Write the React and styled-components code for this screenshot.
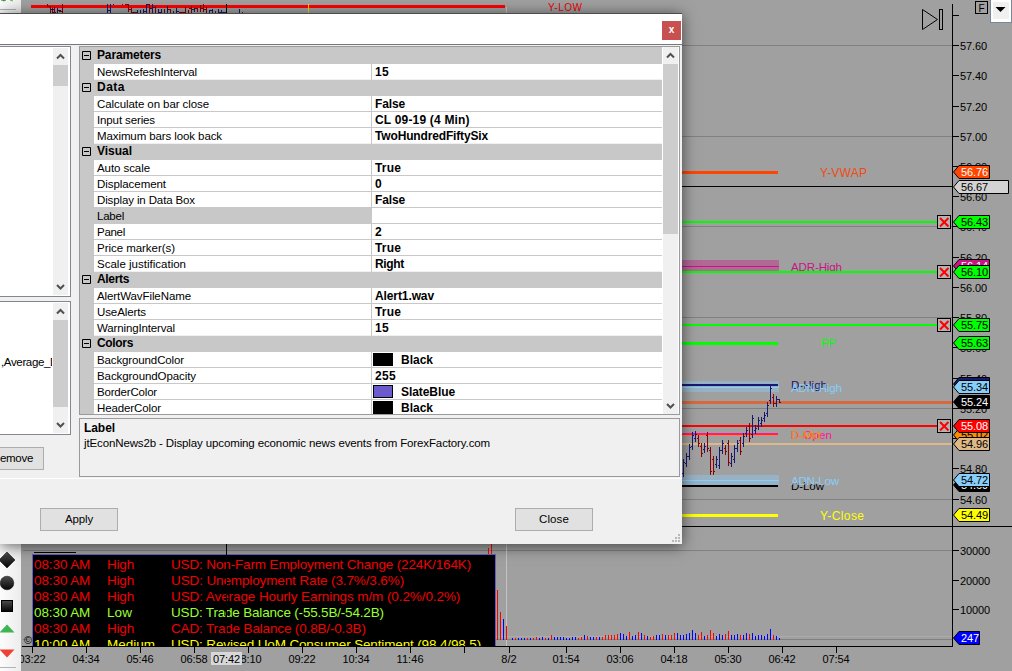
import React from 'react'
import styled, { createGlobalStyle } from 'styled-components';

const GlobalStyle = createGlobalStyle`
    body {
        margin: 0;
        overflow: hidden;
        font-family: "Liberation Sans", Arial, sans-serif;
    }
`

const Screen = styled.div`
    position: relative;
    display: flex;
    width: 1012px;
    height: 671px;
    overflow: hidden;
    background: #a0a0a0;
`

const ToolStrip = styled.div`
    display: flex;
    flex-direction: column;
    justify-content: space-between;
    width: 21px;
    height: 671px;
    background: linear-gradient(90deg, #fcfcfc, #ececec);
`

const ToolGroup = styled.div`
    display: flex;
    flex-direction: column;
    align-items: flex-start;
`

const ToolButton = styled.div`
    height: 23px;
    width: 16px;

    svg {
        display: block;
    }
`

const ToolDivider = styled.div`
    width: 16px;
    height: 1px;
    background: #b4b4b4;
    margin: ${props => props.$margin};
`

const ChartSvg = styled.svg`
    display: block;
    width: 991px;
    height: 671px;
    font-family: "Liberation Sans", Arial, sans-serif;
    font-size: 11px;
`

const NewsPanel = styled.div`
    position: absolute;
    left: 32px;
    top: 554px;
    width: 464px;
    height: 92px;
    box-sizing: border-box;
    overflow: hidden;
    background: #000;
    border: 1px solid #6a5acd;
    border-bottom: 0;
    padding-top: 2px;
`

const NewsRow = styled.div`
    display: grid;
    grid-template-columns: 73px 64px 1fr;
    padding-left: 1px;
    height: 16px;
    font-size: 13.5px;
    line-height: 16px;
    white-space: nowrap;
    color: ${props => props.$color};
`

const CursorLine = styled.div`
    position: absolute;
    left: 226px;
    top: 544px;
    width: 1px;
    height: 102px;
    background: #000;
`

const Dialog = styled.div`
    position: absolute;
    left: 0;
    top: 13px;
    width: 682px;
    height: 531px;
    box-sizing: border-box;
    display: flex;
    flex-direction: column;
    background: #f0f0f0;
    border-top: 1px solid #4c4c4c;
    box-shadow: 0 2px 14px rgba(0, 0, 0, 0.6);
`

const TitleBar = styled.div`
    display: flex;
    justify-content: flex-end;
    height: 30px;
    padding-top: 7px;
    padding-right: 1px;
    box-sizing: border-box;
    background: #fff;
`

const CloseButton = styled.div`
    width: 19px;
    height: 19px;
    background: #c75050;
    color: #fff;
    font-size: 10px;
    font-weight: 700;
    line-height: 18px;
    text-align: center;
`

const Body = styled.div`
    display: flex;
    gap: 8px;
    height: 435px;
    box-sizing: border-box;
    padding-top: 1px;
    border-top: 1px solid #76767a;
    border-bottom: 1px solid #fff;
`

const LeftColumn = styled.div`
    display: flex;
    flex-direction: column;
    width: 71px;
`

const ListBox = styled.div`
    display: flex;
    justify-content: flex-end;
    box-sizing: border-box;
    width: 71px;
    height: ${props => props.$height}px;
    margin-bottom: 4px;
    padding: 1px 1px 1px 0;
    background: #fff;
    border: 1px solid #828790;
    border-left: 0;
    font-size: 11.5px;
`

const ListText = styled.div`
    width: 51px;
    margin-right: auto;
    padding: 53px 0 0 1px;
    overflow: hidden;
    white-space: nowrap;
`

const Scroll = styled.div`
    display: flex;
    flex-direction: column;
    width: 15px;
    margin-right: ${props => props.$gap || 0}px;
    background: #f0f0f0;
    flex-shrink: 0;
`

const ScrollArrow = styled.div`
    height: 17px;
    margin-top: ${props => props.$last ? 'auto' : '0'};

    svg {
        display: block;
    }
`

const ScrollThumb = styled.div`
    height: ${props => props.$height}px;
    background: #cdcdcd;
`

const Button = styled.div`
    box-sizing: border-box;
    width: ${props => props.$width}px;
    height: 23px;
    padding-right: ${props => props.$inset || 0}px;
    border: 1px solid #adadad;
    border-left-width: ${props => props.$cut ? 0 : 1}px;
    background: #e1e1e1;
    font-size: 11.5px;
    line-height: 20px;
    text-align: ${props => props.$cut ? 'right' : 'center'};
`

const RemoveSlot = styled.div`
    margin-top: 8px;
`

const RightColumn = styled.div`
    display: flex;
    flex-direction: column;
    gap: 3px;
    width: 601px;
`

const GridBox = styled.div`
    display: flex;
    box-sizing: border-box;
    height: 369px;
    border: 1px solid #9a9a9c;
    background: #fff;
    overflow: hidden;
    flex-shrink: 0;
`

const Rows = styled.div`
    width: 582px;
    margin-right: 1px;
    font-size: 11.5px;
    white-space: nowrap;
`

const CategoryRow = styled.div`
    display: flex;
    align-items: flex-start;
    gap: 6px;
    box-sizing: border-box;
    height: ${props => props.$first ? 17 : 16}px;
    padding-left: 2px;
    padding-top: ${props => props.$first ? 1 : 0}px;
    background: #c8c8c8;
    font-size: 12px;
    line-height: 14px;
    font-weight: 700;

    svg {
        margin-top: 3px;
    }
`

const PropRow = styled.div`
    display: grid;
    grid-template-columns: 14px 277px 1px 1fr;
    height: 16px;
    line-height: 17px;
`

const Gutter = styled.div`
    background: #c8c8c8;
`

const NameCell = styled.div`
    padding-left: 3px;
    box-sizing: border-box;
    height: 16px;
    border-bottom: 1px solid ${props => props.$last ? '#f0f0f0' : '#c8c8c8'};
    background: ${props => props.$active ? '#c8c8c8' : '#fff'};
`

const ValueCell = styled.div`
    display: flex;
    gap: 8px;
    padding-left: ${props => props.$swatch ? 1 : 3}px;
    box-sizing: border-box;
    height: 16px;
    border-bottom: 1px solid ${props => props.$last ? '#f0f0f0' : '#c8c8c8'};
    font-size: 12px;
    font-weight: 700;
`

const Swatch = styled.div`
    box-sizing: border-box;
    width: 20px;
    height: 13px;
    margin-top: 1px;
    border: 1px solid #000;
    background: ${props => props.$color};
`

const HelpBox = styled.div`
    box-sizing: border-box;
    height: 59px;
    padding: 2px 4px;
    border: 1px solid #9a9a9c;
    font-size: 11.5px;
    line-height: 15px;
    white-space: nowrap;
`

const HelpTitle = styled.div`
    font-size: 12px;
    font-weight: 700;
`

const Footer = styled.div`
    display: flex;
    gap: 397px;
    height: 65px;
    padding: 29px 0 0 40px;
    box-sizing: border-box;
`

const Grip = styled.svg`
    position: absolute;
    right: 1px;
    bottom: 1px;
`

// letter-spacing that makes a label as wide as it was laid out for
const canvas = document.createElement('canvas').getContext('2d');

const getSpacing = (text, width, size, bold) => {
    canvas.font = `${bold ? 700 : 400} ${size}px "Liberation Sans"`;
    return (width - canvas.measureText(text).width) / text.length;
}

const Fit = ({ text, width, size, bold }) => (
    <span style={{ letterSpacing: getSpacing(text, width, size || (bold ? 12 : 11.5), bold) }}>{text}</span>
)

const groups = [
    { title: 'Parameters', width: 64, rows: [['NewsRefeshInterval', 100, '15', 14]] },
    {
        title: 'Data', width: 28, rows: [
            ['Calculate on bar close', 112, 'False', 30],
            ['Input series', 58, 'CL 09-19 (4 Min)', 95],
            ['Maximum bars look back', 125, 'TwoHundredFiftySix', 113],
        ]
    },
    {
        title: 'Visual', width: 35, rows: [
            ['Auto scale', 53, 'True', 26],
            ['Displacement', 69, '0', 7],
            ['Display in Data Box', 98, 'False', 30],
            ['Label', 27, '', 0],
            ['Panel', 28, '2', 7],
            ['Price marker(s)', 78, 'True', 26],
            ['Scale justification', 89, 'Right', 29],
        ]
    },
    {
        title: 'Alerts', width: 32, rows: [
            ['AlertWavFileName', 94, 'Alert1.wav', 59],
            ['UseAlerts', 49, 'True', 26],
            ['WarningInterval', 78, '15', 14],
        ]
    },
    {
        title: 'Colors', width: 36, rows: [
            ['BackgroundColor', 87, 'Black', 32, '#000'],
            ['BackgroundOpacity', 99, '255', 21],
            ['BorderColor', 60, 'SlateBlue', 54, '#6a5acd'],
            ['HeaderColor', 64, 'Black', 32, '#000'],
        ]
    },
];

const news = [
    ['08:30 AM', 'High', 27, 'USD: Non-Farm Employment Change (224K/164K)', 300, '#f00000'],
    ['08:30 AM', 'High', 27, 'USD: Unemployment Rate (3.7%/3.6%)', 233, '#f00000'],
    ['08:30 AM', 'High', 27, 'USD: Average Hourly Earnings m/m (0.2%/0.2%)', 290, '#f00000'],
    ['08:30 AM', 'Low', 25, 'USD: Trade Balance (-55.5B/-54.2B)', 213, '#9aff2f'],
    ['08:30 AM', 'High', 27, 'CAD: Trade Balance (0.8B/-0.3B)', 195, '#f00000'],
    ['10:00 AM', 'Medium', 48, 'USD: Revised UoM Consumer Sentiment (98.4/98.5)', 310, '#ffff00'],
];

const priceTicks = [
    [15, ''], [45, '57.60'], [75, '57.40'], [106, '57.20'], [136, '57.00'], [166, '56.80'],
    [196, '56.60'], [226, '56.40'], [257, '56.20'], [287, '56.00'], [317, '55.80'], [347, '55.60'],
    [378, '55.40'], [408, '55.20'], [438, '55.00'], [468, '54.80'], [499, '54.60'],
    [550, '30000'], [580, '20000'], [609, '10000'],
];

const tags = [
    [172, '56.76', '#ff4500', '#fff'],
    [187, '56.67', '#d3d3d3', '#000', 1008.5],
    [222, '56.43', '#00ff00', '#000'],
    [266, '56.14', '#c71585', '#fff'],
    [272, '56.10', '#00ff00', '#000'],
    [325, '55.75', '#00ff00', '#000'],
    [343, '55.63', '#00ff00', '#000'],
    [384, '55.36', '#191970', '#fff'],
    [387, '55.34', '#87cefa', '#000'],
    [402, '55.24', '#000', '#fff'],
    [435, '55.02', '#ff8c00', '#000'],
    [426, '55.08', '#ff0000', '#fff'],
    [444, '54.96', '#deb887', '#000'],
    [485, '54.69', '#000', '#fff'],
    [480, '54.72', '#87cefa', '#000'],
    [515, '54.49', '#ffff00', '#000'],
    [638, '247', '#0000ff', '#fff', 979.5],
];

// [x1, x2, y, height, colour]
const levels = [
    [682, 778, 171, 3, '#ff4500'],
    [682, 952, 186, 1, '#000'],
    [682, 937, 221, 2, '#00ff00'],
    [682, 779, 266, 1, '#c71585'],
    [682, 937, 271, 2, '#00ff00'],
    [682, 937, 324, 2, '#00ff00'],
    [682, 778, 342, 3, '#00ff00'],
    [682, 778, 383.5, 2, '#191970'],
    [682, 779, 387, 1, '#87cefa'],
    [682, 952, 401, 3, '#d8693e'],
    [682, 937, 425, 2, '#ff0000'],
    [682, 778, 433, 2, '#ff1493'],
    [682, 778, 435, 1, '#ff8c00'],
    [682, 952, 443, 2, '#deb887'],
    [682, 779, 480, 1, '#87cefa'],
    [682, 778, 484.5, 2, '#000'],
    [682, 778, 514, 3, '#ffff00'],
];

const labels = [
    [820, 177, 'Y-VWAP', 47, '#f04a14', 12],
    [791, 271, 'ADR-High', 51, '#c71585'],
    [821, 347, 'PP', 15, '#00ff00'],
    [791, 389, 'D-High', 36, '#191970'],
    [791, 392, 'ADN-High', 51, '#87cefa'],
    [791, 439, 'D-Open', 41, '#ff1493'],
    [791, 439, 'D-Mid', 30, '#ff8c00'],
    [791, 490, 'D-Low', 33, '#000'],
    [791, 485, 'ADN-Low', 48, '#87cefa'],
    [820, 520, 'Y-Close', 44, '#ffff00', 12],
];

const times = [
    [32, '03:22'], [86, '04:34'], [140, '05:46'], [194, '06:58'], [248, '08:10'], [302, '09:22'],
    [356, '10:34'], [410, '11:46'], [464, ''], [509, '8/2'], [566, '01:54'], [620, '03:06'],
    [674, '04:18'], [728, '05:30'], [782, '06:42'], [836, '07:54'],
];

// high, low, direction; one bar every 3px
const bars = [
    [459, 477, 'n'], [453, 467, 'n'], [444, 460, 'n'], [432, 450, 'n'], [431, 442, 'n'], [435, 447, 'r'],
    [443, 457, 'r'], [443, 453, 'n'], [432, 452, 'r'], [447, 475, 'r'], [456, 475, 'r'], [456, 468, 'n'],
    [447, 469, 'n'], [440, 454, 'n'], [445, 455, 'r'], [440, 466, 'r'], [453, 467, 'n'], [445, 463, 'n'],
    [440, 452, 'n'], [437, 455, 'r'], [433, 447, 'n'], [427, 437, 'n'], [423, 442, 'r'], [415, 438, 'n'],
    [425, 434, 'n'], [417, 430, 'n'], [417, 427, 'n'], [412, 422, 'n'], [402, 417, 'n'], [385, 404, 'n'],
    [394, 407, 'r'], [396, 407, 'n'], [399, 403, 'n'],
];

const volume = 'b2 r2 b2 b2 b2 r2 b2 r2 r3 b2 b3 r2 b2 r5 b3 b3 b3 b3 b2 b2 b3 b3 r2 r3 b5 r4 b3 b3 r3 b3 r3 r5 r5 r5 r5 r6 b7 b6 b4 r8 b4 b5 r8 b7 r5 b4 r3 r4 b5 b5 r6 b5 r5 r5 r7 b7 b5 b5 b6 b7 b10 b7 r5 r8 b4 r5 r10 r7 b4 b6 b5 r6 r9 b5 b5 b6 r5 b5 b7 r6 b7 b4 b5 b5 b4 b6 b11 r5 b4 b2'
    .split(' ')
    .map(v => ({ color: v[0] === 'b' ? '#0000ff' : '#ff0000', height: Number(v.slice(1)) }));

// slice of the older session visible above the dialog: x, y, width, height
const oldBars = [
    [47, 4, 1, 3, 'r'], [47, 6, 4, 1, 'r'], [50, 6, 1, 7, 'r'], [52, 8, 1, 5, 'r'], [51, 9, 4, 1, 'n'],
    [53, 12, 3, 1, 'n'], [54, 7, 1, 6, 'r'], [57, 8, 1, 5, 'n'], [57, 10, 4, 1, 'n'], [59, 11, 3, 1, 'r'],
    [62, 4, 1, 9, 'r'], [107, 4, 1, 9, 'n'], [107, 10, 3, 1, 'n'], [110, 4, 1, 9, 'n'],
    [113, 4, 1, 1, 'n'], [122, 4, 1, 1, 'r'], [125, 4, 4, 1, 'r'], [128, 4, 1, 8, 'r'], [129, 9, 3, 1, 'r'],
    [131, 8, 1, 5, 'r'], [132, 12, 5, 1, 'r'], [137, 10, 1, 3, 'n'], [140, 10, 1, 3, 'n'], [143, 9, 1, 4, 'n'],
    [143, 11, 3, 1, 'n'], [146, 4, 1, 9, 'n'], [147, 4, 3, 1, 'n'], [149, 4, 1, 9, 'r'], [150, 8, 3, 1, 'n'],
    [152, 4, 1, 9, 'n'], [153, 7, 3, 1, 'r'], [155, 6, 1, 7, 'r'], [158, 9, 1, 4, 'n'], [158, 12, 4, 1, 'n'],
    [161, 9, 1, 4, 'n'], [164, 9, 1, 4, 'r'], [167, 6, 1, 7, 'n'], [168, 9, 3, 1, 'r'], [170, 9, 1, 4, 'r'],
    [173, 11, 1, 2, 'n'], [176, 8, 1, 5, 'n'], [176, 11, 3, 1, 'n'], [179, 12, 6, 1, 'r'], [185, 7, 1, 6, 'r'],
    [188, 10, 1, 3, 'r'], [189, 8, 3, 1, 'r'], [191, 6, 1, 7, 'r'], [192, 9, 3, 1, 'n'], [194, 8, 1, 4, 'n'],
    [195, 8, 3, 1, 'r'], [197, 8, 1, 4, 'r'], [200, 5, 1, 7, 'r'], [201, 8, 3, 1, 'r'], [203, 4, 1, 8, 'r'],
    [204, 9, 3, 1, 'r'], [206, 7, 1, 6, 'r'], [209, 10, 1, 3, 'n'], [209, 10, 4, 1, 'n'], [212, 9, 1, 4, 'n'],
    [215, 11, 1, 2, 'r'], [218, 9, 1, 4, 'n'], [218, 12, 4, 1, 'n'], [221, 10, 1, 3, 'n'], [222, 12, 4, 1, 'n'],
    [239, 9, 1, 4, 'n'], [242, 12, 1, 1, 'r'],
];

const barColor = { n: '#191970', r: '#8b0000' };

const PriceTag = ({ y, text, fill, color, right = 989.5 }) => (
    <g>
        <path
            d={`M953.5 ${y}L959 ${y - 6.5}H${right}V${y + 6.5}H959Z`}
            fill={fill}
            stroke="#000"
        />
        <text x="961" y={y + 4} fill={color} textLength={text.length === 3 ? 18 : 27}>{text}</text>
    </g>
)

const CrossBox = ({ y }) => (
    <g>
        <rect x="937.5" y={y - 6.5} width="13" height="13" fill="#b4b4b4" stroke="#000" />
        <path d={`M940 ${y - 4}l8.5 8.5m0-8.5l-8.5 8.5`} stroke="#f00" strokeWidth="2" />
    </g>
)

const Chart = () => (
    <ChartSvg viewBox="21 0 991 671">
        <g shapeRendering="crispEdges">
            {[45, 136, 226, 317, 408, 499, 550, 639].map(y => (
                <rect key={y} x="23" y={y} width="929" height="1" fill="#808080" />
            ))}
            <rect x="496" y="636" width="456" height="1" fill="#acacac" />
            <rect x="506" y="7" width="1" height="639" fill="#c4c4c4" />
            <rect x="682" y="381" width="97" height="11" fill="#87cefa" opacity="0.4" />
            <rect x="682" y="475" width="97" height="10" fill="#87cefa" opacity="0.4" />
            <rect x="682" y="260" width="97" height="11" fill="#c71585" opacity="0.4" />
        </g>

        <g fontSize="11.5">
            {labels.map(([x, y, text, width, color, size]) => (
                <text key={text} x={x} y={y} textLength={width} fill={color} fontSize={size}>{text}</text>
            ))}
        </g>

        <g shapeRendering="crispEdges">
            {levels.map(([x1, x2, y, height, color], i) => (
                <rect key={i} x={x1} y={y} width={x2 - x1} height={height} fill={color} />
            ))}
        </g>

        {/* underlying instrument */}
        <g shapeRendering="crispEdges">
            {bars.map(([high, low, dir], i) => (
                <g key={i} fill={barColor[dir]}>
                    <rect x={683 + i * 3} y={high} width="1" height={low - high} />
                    <rect x={682 + i * 3} y={dir === 'n' ? low - 4 : high + 3} width="1" height="1" />
                    <rect x={684 + i * 3} y={dir === 'n' ? high + 3 : low - 4} width="1" height="1" />
                </g>
            ))}
        </g>

        <g shapeRendering="crispEdges">
            <rect x="31" y="5" width="474" height="3" fill="#ff0000" />
            {oldBars.map(([x, y, w, h, dir], i) => (
                <rect key={i} x={x} y={y} width={w} height={h} fill={barColor[dir]} />
            ))}
            <rect x="226" y="4" width="1" height="10" fill="#000" />
            <rect x="308" y="4" width="1" height="10" fill="#ffd700" />
        </g>
        <text x="548" y="11" fontSize="10" fill="#f00000" textLength="34">Y-LOW</text>

        {/* volume */}
        <g shapeRendering="crispEdges">
            {volume.map((v, i) => (
                <rect key={i} x={512 + i * 3} y={640 - v.height} width="1" height={v.height} fill={v.color} />
            ))}
            <rect x="488" y="548" width="1" height="92" fill="#ff0000" />
            <rect x="491" y="544" width="1" height="96" fill="#ff0000" />
            <rect x="497" y="590" width="1" height="50" fill="#ff0000" />
            <rect x="500" y="612" width="1" height="28" fill="#ff0000" />
            <rect x="503" y="619" width="1" height="21" fill="#0000ff" />
            <rect x="506" y="626" width="1" height="14" fill="#ff0000" />
            <rect x="34" y="552" width="42" height="1" fill="#000" />
        </g>

        {/* axes */}
        <g shapeRendering="crispEdges">
            <rect x="952" y="4" width="1" height="643" fill="#000" />
            <rect x="682" y="526" width="330" height="1" fill="#000" />
            <rect x="22" y="646" width="931" height="1" fill="#000" />
            {priceTicks.map(([y]) => <rect key={y} x="953" y={y} width="6" height="1" fill="#000" />)}
            {times.map(([x]) => <rect key={x} x={x} y="647" width="1" height="6" fill="#000" />)}
        </g>
        {priceTicks.map(([y, text]) => (
            <text key={y} x="960" y={y + 5} textLength={text ? (text.length - 1) * 6 + (text[2] === '.' ? 3 : 6) : undefined}>{text}</text>
        ))}
        {times.map(([x, text]) => (
            <text key={x} x={x} y="663" textAnchor="middle" textLength={text.length === 5 ? 27 : undefined}>{text}</text>
        ))}
        <rect x="211" y="652" width="31" height="13" fill="#d8d8d8" />
        <text x="213" y="663" textLength="27">07:42</text>
        <text x="28" y="644" textAnchor="middle" fontSize="11">©</text>

        {tags.map(([y, text, fill, color, right]) => (
            <PriceTag key={text} y={y} text={text} fill={fill} color={color} right={right} />
        ))}
        {[222, 272, 325, 426].map(y => <CrossBox key={y} y={y} />)}

        {/* jump to last bar, F mode, panel menu */}
        <path d="M922.5 9.5L937.5 19.5L922.5 29.5Z" fill="none" stroke="#000" />
        <rect x="939.5" y="9.5" width="3" height="20" fill="none" stroke="#000" />
        <rect x="975.5" y="1.5" width="12" height="12" fill="none" stroke="#000" />
        <text x="978.5" y="11.5" fontSize="10">F</text>
        <rect x="990" y="0" width="22" height="23" fill="#778899" />
        <rect x="991" y="0" width="20" height="22" fill="#fff" />
        <rect x="993" y="2" width="16" height="17" fill="#f0f0f0" />
        <path d="M995.5 7H1005.5L1000.5 12Z" fill="#000" />
    </ChartSvg>
)

const Arrow = ({ down }) => (
    <ScrollArrow $last={down}>
        <svg width="15" height="17">
            <path
                d={down ? 'M4 7L7.5 10.5L11 7' : 'M4 10.5L7.5 7L11 10.5'}
                fill="none"
                stroke="#505050"
                strokeWidth="2"
            />
        </svg>
    </ScrollArrow>
)

const Tools = () => (
    <ToolStrip>
        <ToolGroup>
            <svg width="16" height="9">
                <path d="M1 0L4 1L6 0M10 0L13 1" stroke="#5fb45f" />
            </svg>
            <ToolDivider $margin="0" />
        </ToolGroup>
        <ToolGroup>
            <svg width="0" height="0">
                <defs>
                    <linearGradient id="dark" x2="0" y2="1">
                        <stop stopColor="#4d4d4d" />
                        <stop offset="1" stopColor="#050505" />
                    </linearGradient>
                </defs>
            </svg>
            <ToolButton><svg width="16" height="16"><path d="M7 0L15 8L7 16L-1 8Z" fill="url(#dark)" stroke="#000" strokeWidth=".5" /></svg></ToolButton>
            <ToolButton><svg width="16" height="16"><circle cx="7" cy="8" r="6.8" fill="url(#dark)" stroke="#000" strokeWidth=".5" /></svg></ToolButton>
            <ToolButton><svg width="16" height="16"><rect x="1.5" y="2.5" width="11" height="11" fill="url(#dark)" stroke="#000" /></svg></ToolButton>
            <ToolButton><svg width="16" height="16"><path d="M7 3.5L14.5 11.5H-.5Z" fill="#3eb550" /></svg></ToolButton>
            <ToolButton><svg width="16" height="16"><path d="M-.5 5.5H14.5L7 13.5Z" fill="#ef4136" /></svg></ToolButton>
            <ToolDivider $margin="0 0 3px" />
        </ToolGroup>
    </ToolStrip>
)

const PropertyGrid = () => (
    <GridBox>
        <Rows>
            {groups.map((group, g) => (
                <React.Fragment key={group.title}>
                    <CategoryRow $first={g === 0}>
                        <svg width="9" height="9">
                            <path d="M.5.5H8.5V8.5H.5ZM2 4.5H7" fill="none" stroke="#000" />
                        </svg>
                        <Fit text={group.title} width={group.width} bold />
                    </CategoryRow>
                    {group.rows.map(([name, nameWidth, value, valueWidth, swatch], i) => (
                        <PropRow key={name}>
                            <Gutter />
                            <NameCell $active={name === 'Label'} $last={i === group.rows.length - 1}>
                                <Fit text={name} width={nameWidth} />
                            </NameCell>
                            <Gutter />
                            <ValueCell $swatch={swatch} $last={i === group.rows.length - 1}>
                                {swatch && <Swatch $color={swatch} />}
                                {value && <Fit text={value} width={valueWidth} bold />}
                            </ValueCell>
                        </PropRow>
                    ))}
                </React.Fragment>
            ))}
        </Rows>
        <Scroll>
            <Arrow />
            <ScrollThumb $height={170} />
            <Arrow down />
        </Scroll>
    </GridBox>
)

const IndicatorDialog = () => (
    <Dialog>
        <TitleBar>
            <CloseButton>x</CloseButton>
        </TitleBar>
        <Body>
            <LeftColumn>
                <ListBox $height={251}>
                    <Scroll $gap={1}>
                        <Arrow />
                        <ScrollThumb $height={21} />
                        <Arrow down />
                    </Scroll>
                </ListBox>
                <ListBox $height={134}>
                    <ListText><Fit text=",Average_D" width={57} /></ListText>
                    <Scroll $gap={1}>
                        <Arrow />
                        <ScrollThumb $height={87} />
                        <Arrow down />
                    </Scroll>
                </ListBox>
                <RemoveSlot>
                    <Button $width={44} $cut $inset={11}><Fit text="emove" width={33} /></Button>
                </RemoveSlot>
            </LeftColumn>
            <RightColumn>
                <PropertyGrid />
                <HelpBox>
                    <HelpTitle><Fit text="Label" width={31} bold /></HelpTitle>
                    <Fit text="jtEconNews2b - Display upcoming economic news events from ForexFactory.com" width={406} />
                </HelpBox>
            </RightColumn>
        </Body>
        <Footer>
            <Button $width={78}><Fit text="Apply" width={28} /></Button>
            <Button $width={78}><Fit text="Close" width={30} /></Button>
        </Footer>
        <Grip width="9" height="9">
            <path d="M6 0h2v2h-2zM6 3h2v2h-2zM6 6h2v2h-2zM3 3h2v2h-2zM3 6h2v2h-2zM0 6h2v2h-2z" fill="#b8b8b8" />
        </Grip>
    </Dialog>
)

const App = () => {
    return (
        <Screen>
            <GlobalStyle />
            <Tools />
            <Chart />
            <NewsPanel>
                {news.map(([time, impact, impactWidth, title, width, color], i) => (
                    <NewsRow key={i} $color={color}>
                        <Fit text={time} width={57} size={13.5} />
                        <Fit text={impact} width={impactWidth} size={13.5} />
                        <Fit text={title} width={width} size={13.5} />
                    </NewsRow>
                ))}
            </NewsPanel>
            <CursorLine />
            <IndicatorDialog />
        </Screen>
    )
}

export default App;
